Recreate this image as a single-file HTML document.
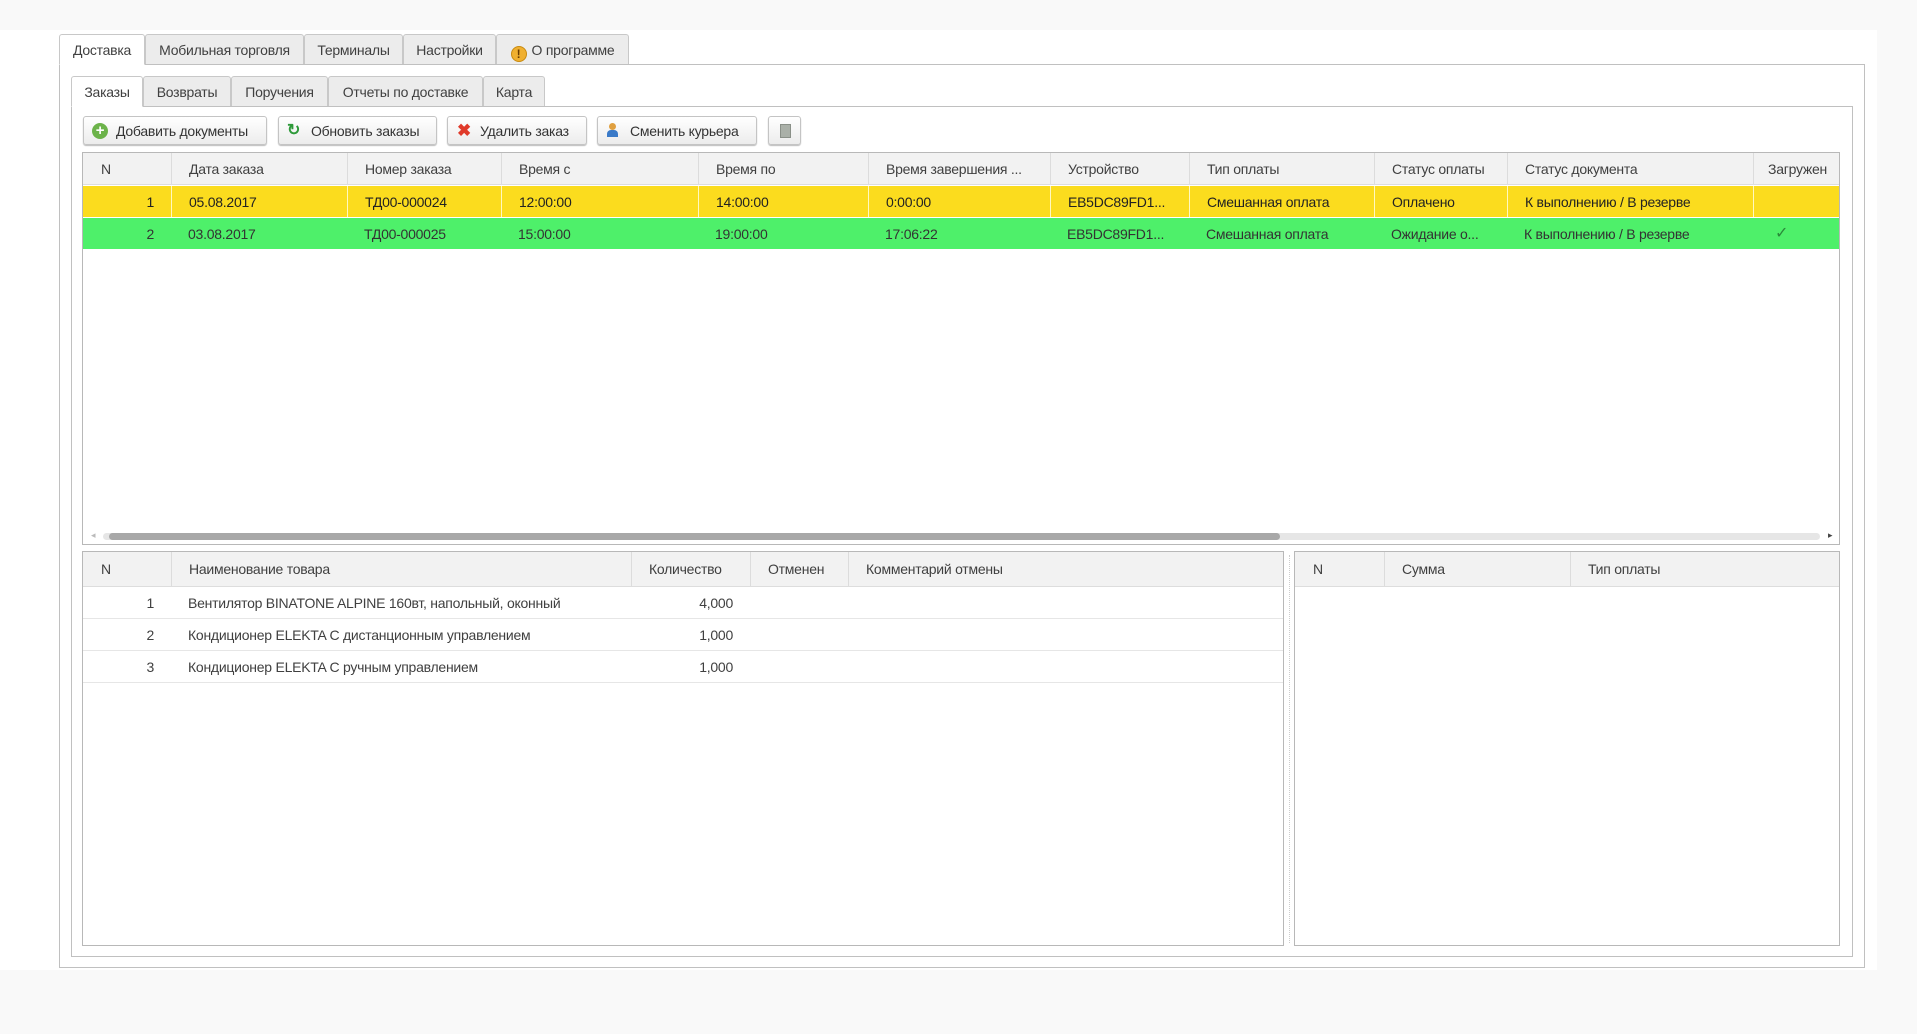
<!DOCTYPE html>
<html><head><meta charset="utf-8"><style>
*{box-sizing:border-box;margin:0;padding:0}
body{width:1917px;height:1034px;background:#f9f9f9;position:relative;overflow:hidden;font-family:"Liberation Sans Narrow","Liberation Sans",sans-serif;font-size:14px;letter-spacing:-0.25px;color:#404040}
.a{position:absolute}
.white{left:0;top:30px;width:1877px;height:940px;background:#fff}
.tab{position:absolute;border:1px solid #c8c8c8;border-bottom:none;background:#ececec;text-align:center;border-radius:3px 3px 0 0;white-space:nowrap}
.tab.on{background:#fff}
.panel{position:absolute;border:1px solid #c0c0c0;background:#fff}
.btn{position:absolute;top:116px;height:29px;border:1px solid #c4c4c4;border-radius:3px;background:linear-gradient(#fff,#ececec);box-shadow:0 1px 1px #bbb;line-height:28px;padding-left:32px;color:#333}
.grid{position:absolute;border:1px solid #b8b8b8;background:#fff;overflow:hidden}
.hdr{position:absolute;left:0;top:0;right:0;background:#f2f2f2;border-bottom:1px solid #ddd}
.c{position:absolute;white-space:nowrap;overflow:hidden;padding-left:17px}
.hc{border-left:1px solid #dcdcdc;top:0;bottom:0}
.row{position:absolute;left:0;right:0}
.r{text-align:right;padding:0 17px 0 0}
</style></head><body>
<div class="a white"></div>
<div class="panel" style="left:59px;top:64px;width:1806px;height:904px"></div>
<div class="tab on" style="left:59px;top:34px;width:86px;height:31px;line-height:31px;border-bottom:1px solid #fff">Доставка</div>
<div class="tab" style="left:145px;top:34px;width:159px;height:30px;line-height:31px">Мобильная торговля</div>
<div class="tab" style="left:304px;top:34px;width:99px;height:30px;line-height:31px">Терминалы</div>
<div class="tab" style="left:403px;top:34px;width:93px;height:30px;line-height:31px">Настройки</div>
<div class="tab" style="left:496px;top:34px;width:133px;height:30px;line-height:31px"><span style="display:inline-block;width:16px;height:16px;border-radius:50%;background:#f0b030;border:1px solid #c88a10;color:#6a3c00;font-size:12px;line-height:14px;font-weight:bold;vertical-align:-3px;margin-right:5px">!</span>О программе</div>
<div class="panel" style="left:71px;top:106px;width:1782px;height:851px"></div>
<div class="tab on" style="left:71px;top:76px;width:72px;height:31px;line-height:31px;border-bottom:1px solid #fff">Заказы</div>
<div class="tab" style="left:143px;top:76px;width:88px;height:30px;line-height:31px">Возвраты</div>
<div class="tab" style="left:231px;top:76px;width:97px;height:30px;line-height:31px">Поручения</div>
<div class="tab" style="left:328px;top:76px;width:155px;height:30px;line-height:31px">Отчеты по доставке</div>
<div class="tab" style="left:483px;top:76px;width:62px;height:30px;line-height:31px">Карта</div>
<div class="btn" style="left:83px;width:184px"><span class="a" style="left:8px;top:6px;width:16px;height:16px;border-radius:50%;background:#6cb34a;color:#fff;font-size:15px;line-height:15px;text-align:center;font-weight:bold">+</span>Добавить документы</div>
<div class="btn" style="left:278px;width:159px"><span class="a" style="left:8px;top:0;color:#2e9a3a;font-size:16px;font-weight:bold">↻</span>Обновить заказы</div>
<div class="btn" style="left:447px;width:140px"><span class="a" style="left:9px;top:0;color:#e03a2a;font-size:17px;font-weight:bold">✖</span>Удалить заказ</div>
<div class="btn" style="left:597px;width:160px;padding-left:32px"><span class="a" style="left:9px;top:6px;width:10px;height:14px"><span class="a" style="left:2px;top:0;width:7px;height:7px;border-radius:50%;background:#e0a040"></span><span class="a" style="left:0;top:7px;width:11px;height:7px;border-radius:4px 4px 0 0;background:#3a7ac8"></span></span>Сменить курьера</div>
<div class="btn" style="left:768px;width:33px;padding:0"><span class="a" style="left:11px;top:7px;width:11px;height:14px;background:#aab0a8;border:1px solid #8a9088"></span></div>
<div class="grid" style="left:82px;top:152px;width:1758px;height:393px">
 <div class="hdr" style="height:32px;line-height:32px">
  <div class="c" style="left:0;width:88px;padding-left:18px">N</div>
  <div class="c hc" style="left:88px;width:176px">Дата заказа</div>
  <div class="c hc" style="left:264px;width:154px">Номер заказа</div>
  <div class="c hc" style="left:418px;width:197px">Время с</div>
  <div class="c hc" style="left:615px;width:170px">Время по</div>
  <div class="c hc" style="left:785px;width:182px">Время завершения ...</div>
  <div class="c hc" style="left:967px;width:139px">Устройство</div>
  <div class="c hc" style="left:1106px;width:185px">Тип оплаты</div>
  <div class="c hc" style="left:1291px;width:133px">Статус оплаты</div>
  <div class="c hc" style="left:1424px;width:246px">Статус документа</div>
  <div class="c hc" style="left:1670px;width:88px;padding-left:14px">Загружен</div>
 </div>
 <div class="row" style="top:33px;height:31px;line-height:32px;background:#fbdc1e;color:#222">
  <div class="c r" style="left:0;width:88px">1</div>
  <div class="c hc" style="left:88px;width:176px;border-color:#fff8c0">05.08.2017</div>
  <div class="c hc" style="left:264px;width:154px;border-color:#fff8c0">ТД00-000024</div>
  <div class="c hc" style="left:418px;width:197px;border-color:#fff8c0">12:00:00</div>
  <div class="c hc" style="left:615px;width:170px;border-color:#fff8c0">14:00:00</div>
  <div class="c hc" style="left:785px;width:182px;border-color:#fff8c0">0:00:00</div>
  <div class="c hc" style="left:967px;width:139px;border-color:#fff8c0">EB5DC89FD1...</div>
  <div class="c hc" style="left:1106px;width:185px;border-color:#fff8c0">Смешанная оплата</div>
  <div class="c hc" style="left:1291px;width:133px;border-color:#fff8c0">Оплачено</div>
  <div class="c hc" style="left:1424px;width:246px;border-color:#fff8c0">К выполнению / В резерве</div>
  <div class="c hc" style="left:1670px;width:88px;border-color:#fff8c0"></div>
 </div>
 <div class="row" style="top:65px;height:31px;line-height:32px;background:#4ef06a;color:#333">
  <div class="c r" style="left:0;width:88px">2</div>
  <div class="c" style="left:88px;width:176px">03.08.2017</div>
  <div class="c" style="left:264px;width:154px">ТД00-000025</div>
  <div class="c" style="left:418px;width:197px">15:00:00</div>
  <div class="c" style="left:615px;width:170px">19:00:00</div>
  <div class="c" style="left:785px;width:182px">17:06:22</div>
  <div class="c" style="left:967px;width:139px">EB5DC89FD1...</div>
  <div class="c" style="left:1106px;width:185px">Смешанная оплата</div>
  <div class="c" style="left:1291px;width:133px">Ожидание о...</div>
  <div class="c" style="left:1424px;width:246px">К выполнению / В резерве</div>
  <div class="c" style="left:1670px;width:88px;padding-left:22px;color:#2a8a3a;font-size:16px">✓</div>
 </div>
 <div class="a" style="left:8px;top:377px;color:#bbb;font-size:9px">◂</div>
 <div class="a" style="left:1745px;top:377px;color:#444;font-size:9px">▸</div>
 <div class="a" style="left:20px;top:380px;width:1717px;height:7px;background:#e6e6e6;border-radius:4px"></div>
 <div class="a" style="left:26px;top:380px;width:1171px;height:7px;background:#a8a8a8;border-radius:4px"></div>
</div>
<div class="grid" style="left:82px;top:551px;width:1202px;height:395px">
 <div class="hdr" style="height:35px;line-height:35px">
  <div class="c" style="left:0;width:88px;padding-left:18px">N</div>
  <div class="c hc" style="left:88px;width:460px">Наименование товара</div>
  <div class="c hc" style="left:548px;width:119px">Количество</div>
  <div class="c hc" style="left:667px;width:98px">Отменен</div>
  <div class="c hc" style="left:765px;width:437px">Комментарий отмены</div>
 </div>
 <div class="row" style="top:35px;height:32px;line-height:32px;border-bottom:1px solid #e6e6e6">
  <div class="c r" style="left:0;width:88px">1</div><div class="c" style="left:88px;width:460px">Вентилятор BINATONE ALPINE 160вт, напольный, оконный</div><div class="c r" style="left:548px;width:119px">4,000</div></div>
 <div class="row" style="top:67px;height:32px;line-height:32px;border-bottom:1px solid #e6e6e6">
  <div class="c r" style="left:0;width:88px">2</div><div class="c" style="left:88px;width:460px">Кондиционер ELEKTA С дистанционным управлением</div><div class="c r" style="left:548px;width:119px">1,000</div></div>
 <div class="row" style="top:99px;height:32px;line-height:32px;border-bottom:1px solid #e6e6e6">
  <div class="c r" style="left:0;width:88px">3</div><div class="c" style="left:88px;width:460px">Кондиционер ELEKTA С ручным управлением</div><div class="c r" style="left:548px;width:119px">1,000</div></div>
</div>
<div class="a" style="left:1289px;top:555px;height:388px;border-left:1px dotted #ccc"></div>
<div class="grid" style="left:1294px;top:551px;width:546px;height:395px">
 <div class="hdr" style="height:35px;line-height:35px">
  <div class="c" style="left:0;width:89px;padding-left:18px">N</div>
  <div class="c hc" style="left:89px;width:186px">Сумма</div>
  <div class="c hc" style="left:275px;width:271px">Тип оплаты</div>
 </div>
</div>
</body></html>
